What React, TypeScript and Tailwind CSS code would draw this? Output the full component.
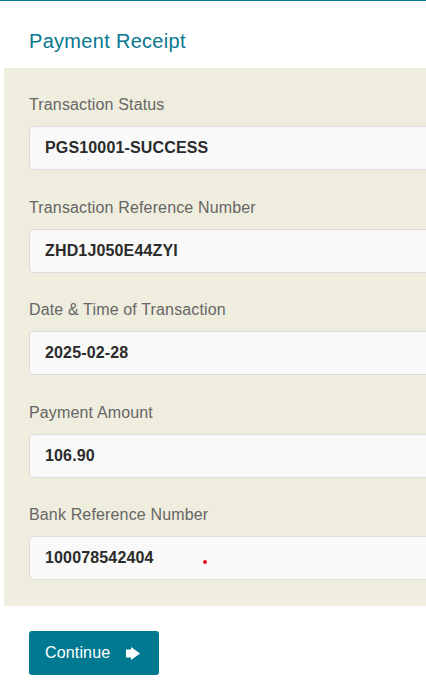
const fields = [
  { label: "Transaction Status", value: "PGS10001-SUCCESS" },
  { label: "Transaction Reference Number", value: "ZHD1J050E44ZYI" },
  { label: "Date & Time of Transaction", value: "2025-02-28" },
  { label: "Payment Amount", value: "106.90" },
  { label: "Bank Reference Number", value: "100078542404", dot: true },
];

function ArrowRight() {
  return (
    <svg width="14" height="13" viewBox="0 0 14 13" fill="white">
      <path d="M0 2.5 H5 V0 L14 6.5 L5 13 V10.5 H0 Z" />
    </svg>
  );
}

export default function App() {
  return (
    <div
      className="w-[426px] min-h-[695px] overflow-hidden bg-white border-t border-[#0a7a91] tracking-[0.15px]"
      style={{ fontFamily: '"Liberation Sans", Arial, sans-serif' }}
    >
      <div className="pl-[4px]">
        <h1 className="ml-[25px] mt-[26px] text-[20px] leading-[28px] text-[#08778f] font-normal tracking-[0.3px]">
          Payment Receipt
        </h1>
        <div className="mt-[13px] w-[480px] bg-[#efeddd] pl-[25px] pt-[25px] pb-[26px] flex flex-col gap-[25.5px]">
          {fields.map((f) => (
            <div key={f.label} className="flex flex-col">
              <label className="text-[16px] leading-[24px] text-[#666666]">{f.label}</label>
              <div className="relative mt-[9px] h-[44px] w-[430px] rounded-[4px] border border-[#dcdcdc] bg-[#f9f9f9] pl-[15px] flex items-center">
                <span className="text-[16px] font-bold text-[#2b2b2b]">{f.value}</span>
                {f.dot && (
                  <span className="absolute left-[173px] top-[23px] h-[4px] w-[4px] rounded-full bg-[#e3121b]" />
                )}
              </div>
            </div>
          ))}
        </div>
        <button className="ml-[25px] mt-[25px] h-[44px] w-[130px] rounded-[3px] bg-[#007991] pl-[16px] flex items-center gap-[16px] text-white text-[16px]">
          <span>Continue</span>
          <ArrowRight />
        </button>
      </div>
    </div>
  );
}
